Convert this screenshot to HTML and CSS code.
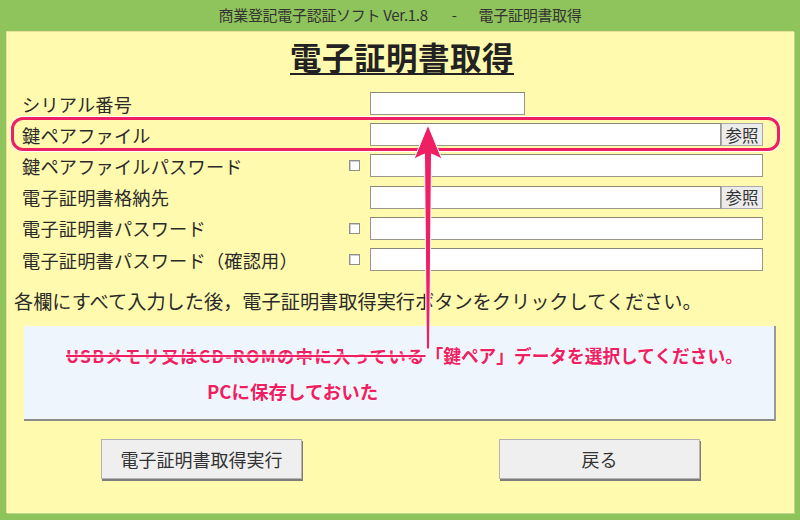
FILE: index.html
```html
<!DOCTYPE html>
<html lang="ja">

<head>
  <meta charset="UTF-8" />
  <title>電子証明書取得</title>
  <link rel="stylesheet" href="styles.css">
</head>

<body>
  <div class="window">
    <div class="titlebar">商業登記電子認証ソフト Ver.1.8<span class="dash">-</span>電子証明書取得</div>

    <div class="panel">
      <h1>電子証明書取得</h1>

      <div class="fields">
        <div class="label">シリアル番号</div>
        <div class="check"></div>
        <div class="control"><input type="text" class="short" /></div>

        <div class="label">鍵ペアファイル</div>
        <div class="check"></div>
        <div class="control"><input type="text" /><button class="browse">参照</button></div>

        <div class="label">鍵ペアファイルパスワード</div>
        <div class="check"><input type="checkbox" /></div>
        <div class="control"><input type="password" /></div>

        <div class="label">電子証明書格納先</div>
        <div class="check"></div>
        <div class="control"><input type="text" /><button class="browse">参照</button></div>

        <div class="label">電子証明書パスワード</div>
        <div class="check"><input type="checkbox" /></div>
        <div class="control"><input type="password" /></div>

        <div class="label">電子証明書パスワード（確認用）</div>
        <div class="check"><input type="checkbox" /></div>
        <div class="control"><input type="password" /></div>
      </div>

      <p class="hint">各欄にすべて入力した後，電子証明書取得実行ボタンをクリックしてください。</p>

      <div class="message">
        <div class="note-line"><s>USBメモリ又はCD-ROMの中に入っている</s>「鍵ペア」データを選択してください。</div>
        <div class="note-line insert">PCに保存しておいた</div>
      </div>

      <div class="actions">
        <button class="action">電子証明書取得実行</button>
        <button class="action">戻る</button>
      </div>
    </div>

    <!-- 注釈（赤枠と矢印） -->
    <div class="mark-box"></div>
    <svg class="mark-arrow" width="40" height="230" viewBox="0 0 40 230">
      <path d="M20 2 L34 36 L23.5 31 L21.6 226 L18.4 226 L16.5 31 L6 36 Z" fill="#ee2063" stroke="#fff" stroke-width="1" stroke-linejoin="round" />
    </svg>
  </div>
</body>
</html>
```

FILE: styles.css
```css
body {
  margin: 0;
  background: #8fc35b;
  font-family: "Noto Sans CJK JP", "DejaVu Sans", sans-serif;
  color: #222;
}

.window {
  position: relative;
  width: 800px;
  height: 520px;
  overflow: hidden;
}

.titlebar {
  height: 31px;
  line-height: 30px;
  text-align: center;
  font-size: 15px;
  color: #333;
  letter-spacing: -0.3px;
}

.titlebar .dash {
  margin: 0 22px 0 24px;
}

.panel {
  margin: 0 6px 0 6px;
  height: 482px;
  background: #fffaae;
  box-shadow: inset 1px 1px 0 #e6e19a, 1px 1px 0 #b5d88a;
  padding: 0 31px 0 16px;
  box-sizing: border-box;
}

h1 {
  margin: 0;
  padding: 6px 0 0 19px;
  text-align: center;
  font-size: 31.5px;
  font-weight: bold;
  line-height: 38px;
  text-decoration: underline;
  text-decoration-thickness: 2px;
  text-underline-offset: 3px;
  letter-spacing: 0.5px;
}

.fields {
  margin-top: 13px;
  display: grid;
  grid-template-columns: 326px 22px 1fr;
  grid-template-rows: repeat(6, 31.2px);
  align-items: center;
}

.label {
  font-size: 18.2px;
  line-height: 24px;
  color: #2a2a2a;
  letter-spacing: 0.2px;
}

.check {
  display: flex;
  align-items: center;
}

.check input {
  margin: 0 0 0 1px;
  width: 11px;
  height: 11px;
  appearance: none;
  border: 1px solid #8f8f8f;
  background: #fff;
  box-shadow: inset 1px 1px 0 #ccc;
}

.control {
  display: flex;
  height: 23px;
}

.control input {
  flex: 1;
  height: 23px;
  box-sizing: border-box;
  border: 1px solid #9b9788;
  border-top-color: #8a8678;
  background: #fff;
  margin: 0;
}

.control input.short {
  flex: none;
  width: 155px;
}

.browse {
  width: 42px;
  height: 23px;
  margin: 0;
  padding: 0;
  border: 1px solid #a9a9a9;
  background: #ececec;
  font-family: inherit;
  font-size: 16.5px;
  line-height: 20px;
  color: #333;
}

.hint {
  margin: 13px 0 0 -8px;
  font-size: 19.2px;
  line-height: 26px;
  color: #2a2a2a;
}

.message {
  margin: 12px 0 0 2px;
  width: 752px;
  height: 95px;
  box-sizing: border-box;
  background: #eff5fc;
  border-right: 2px solid #9a9a9a;
  border-bottom: 2px solid #8c8c8c;
  padding: 17px 0 0 42px;
}

.note-line {
  font-size: 17.7px;
  font-weight: bold;
  color: #ee2063;
  line-height: 24px;
  text-shadow: 0 0 2px #fff, 0 0 2px #fff;
}

.note-line s {
  text-decoration-thickness: 2px;
  font-size: 17.5px;
  letter-spacing: 1.2px;
}

.note-line.insert {
  margin: 11px 0 0 141px;
  font-size: 18.5px;
}

.actions {
  display: flex;
  gap: 197px;
  margin: 18px 0 0 79px;
}

.action {
  width: 201px;
  height: 40px;
  background: #efefef;
  border: 1px solid #b3b3b3;
  box-shadow: 1px 2px 0 #7d7d7d;
  font-family: inherit;
  font-size: 18px;
  color: #333;
}

.mark-box {
  position: absolute;
  left: 11px;
  top: 117px;
  width: 769px;
  height: 34px;
  box-sizing: border-box;
  border: 3px solid #ee2063;
  border-radius: 12px;
  box-shadow: 0 0 0 1px #fff;
}

.mark-arrow {
  position: absolute;
  left: 408px;
  top: 123px;
}
```
